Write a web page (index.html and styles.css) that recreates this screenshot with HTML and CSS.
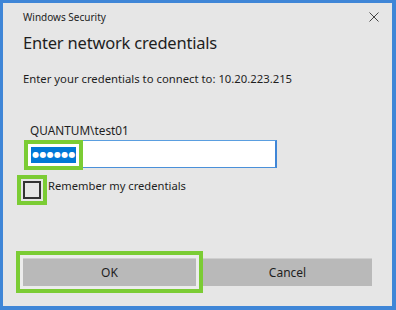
FILE: index.html
```html
<!DOCTYPE html>
<html lang="en">

<head>
    <meta charset="UTF-8">
    <title>Windows Security</title>
    <link rel="stylesheet" href="styles.css">
</head>

<body>
    <div class="window">
        <div class="window__titlebar">
            <span class="titlebar__text">Windows Security</span>
            <button class="titlebar__close" aria-label="Close">
                <svg width="10" height="10" viewBox="0 0 10 10">
                    <path d="M0.5 0.5 L9.5 9.5 M9.5 0.5 L0.5 9.5" stroke="#444" stroke-width="1" fill="none" />
                </svg>
            </button>
        </div>

        <h1 class="window__h1">Enter network credentials</h1>
        <p class="window__info">Enter your credentials to connect to: 10.20.223.215</p>

        <p class="window__user">QUANTUM\test01</p>
        <div class="field">
            <span class="field__selected">&#9679;&#9679;&#9679;&#9679;&#9679;&#9679;</span>
        </div>

        <label class="remember">
            <span class="remember__box"></span>
            <span class="remember__text">Remember my credentials</span>
        </label>

        <div class="buttons">
            <button class="btn btn--ok">OK</button>
            <button class="btn btn--cancel">Cancel</button>
        </div>
    </div>
</body>

</html>
```

FILE: styles.css
```css
* {
    padding: 0;
    margin: 0;
    box-sizing: border-box;
}

body {
    background-color: #e6e6e6;
    font-family: "Noto Sans", "Open Sans", sans-serif;
    color: #1e1e1e;
}

/* Ventana */
.window {
    display: flex;
    flex-direction: column;
    width: 396px;
    height: 310px;
    border: 3px solid #3f86d7;
    border-right-width: 4px;
    border-bottom-width: 4px;
    background-color: #e6e6e6;
}

.window__titlebar {
    display: flex;
    justify-content: space-between;
    align-items: center;
    height: 28px;
    padding-left: 20px;
    padding-right: 13px;
}

.titlebar__text {
    font-size: 10px;
    line-height: 16px;
    color: #222;
}

.titlebar__close {
    display: flex;
    border: none;
    background: none;
}

.window__h1 {
    font-size: 16.5px;
    font-weight: normal;
    line-height: 24px;
    letter-spacing: -0.2px;
    padding-left: 20px;
}

.window__info {
    margin-top: 16px;
    font-size: 11.3px;
    line-height: 16px;
    padding-left: 20px;
}

.window__user {
    margin-top: 35px;
    font-size: 11.8px;
    line-height: 16px;
    padding-left: 27px;
}

/* Campo */
.field {
    display: flex;
    align-items: flex-start;
    margin-top: 2px;
    margin-left: 22px;
    width: 252px;
    height: 28px;
    padding-top: 6px;
    padding-left: 5px;
    background-color: #fff;
    border: 1px solid #5a9ee0;
    border-right: 2px solid #3f86d7;
    border-bottom-color: #4a90d9;
}

.field__selected {
    display: inline-block;
    width: 45px;
    height: 16px;
    padding-left: 1px;
    background-color: #0078d7;
    color: #fff;
    font-family: "DejaVu Sans", sans-serif;
    font-size: 8px;
    line-height: 16px;
    letter-spacing: 0.3px;
    text-align: center;
    white-space: nowrap;
    box-shadow: 0 0 0 3px #fff, 0 0 0 7px #7bcc34;
}

/* Checkbox */
.remember {
    display: flex;
    align-items: flex-start;
    gap: 7px;
    margin-top: 10px;
    margin-left: 20px;
    height: 22px;
    font-size: 11.2px;
    line-height: 16px;
}

.remember__box {
    width: 18px;
    height: 18px;
    margin-top: 3px;
    border: 2px solid #333;
    background-color: #e6e6e6;
    box-shadow: 0 0 0 2px #e6e6e6, 0 0 0 6px #7bcc34;
}

/* Botones */
.buttons {
    display: flex;
    gap: 7px;
    margin-top: auto;
    margin-bottom: 20px;
    margin-left: 20px;
}

.btn {
    width: 173px;
    height: 28px;
    border: none;
    border-top: 1px solid #cfcfcf;
    background-color: #b9b9b9;
    font-family: inherit;
    font-size: 12px;
    color: #1e1e1e;
}

.btn--cancel {
    width: 169px;
}

.btn--ok {
    box-shadow: 0 0 0 3px #ececec, 0 0 0 7px #7bcc34;
}
```
